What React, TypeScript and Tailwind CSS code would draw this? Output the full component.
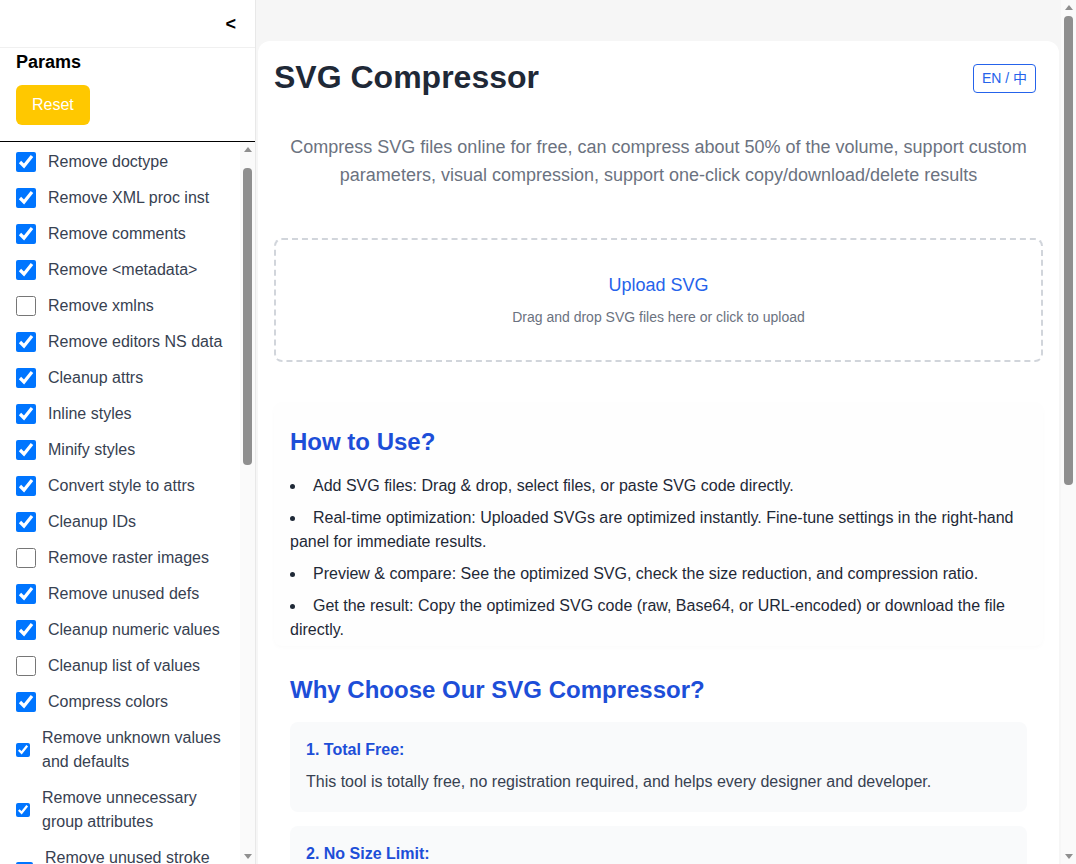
import React from 'react';

type Param = { label: string; checked: boolean; box?: string };

// the long labels wrap, and their checkbox is squeezed like in the original
const params: Param[] = [
  { label: 'Remove doctype', checked: true },
  { label: 'Remove XML proc inst', checked: true },
  { label: 'Remove comments', checked: true },
  { label: 'Remove <metadata>', checked: true },
  { label: 'Remove xmlns', checked: false },
  { label: 'Remove editors NS data', checked: true },
  { label: 'Cleanup attrs', checked: true },
  { label: 'Inline styles', checked: true },
  { label: 'Minify styles', checked: true },
  { label: 'Convert style to attrs', checked: true },
  { label: 'Cleanup IDs', checked: true },
  { label: 'Remove raster images', checked: false },
  { label: 'Remove unused defs', checked: true },
  { label: 'Cleanup numeric values', checked: true },
  { label: 'Cleanup list of values', checked: false },
  { label: 'Compress colors', checked: true },
  { label: 'Remove unknown values and defaults', checked: true, box: 'w-[14px] h-[14px]' },
  { label: 'Remove unnecessary group attributes', checked: true, box: 'w-[14px] h-[14px]' },
  { label: 'Remove unused stroke and fill', checked: true, box: 'w-[17px] h-[17px]' },
  { label: 'Remove viewBox', checked: false },
  { label: 'Cleanup enable background', checked: true },
  { label: 'Remove hidden elems', checked: true },
  { label: 'Remove empty text', checked: true },
  { label: 'Convert shape to path', checked: true },
  { label: 'Convert ellipse to circle', checked: true },
  { label: 'Move elems attrs to group', checked: true },
  { label: 'Move group attrs to elems', checked: true },
  { label: 'Collapse groups', checked: true },
  { label: 'Convert path data', checked: true },
  { label: 'Convert transform', checked: true },
  { label: 'Remove empty attrs', checked: true },
  { label: 'Remove empty containers', checked: true },
  { label: 'Merge paths', checked: true },
  { label: 'Remove unused NS', checked: true },
  { label: 'Sort attrs', checked: false },
  { label: 'Sort defs children', checked: true },
  { label: 'Remove title', checked: true },
  { label: 'Remove desc', checked: true },
];

const steps = [
  'Add SVG files: Drag & drop, select files, or paste SVG code directly.',
  'Real-time optimization: Uploaded SVGs are optimized instantly. Fine-tune settings in the right-hand panel for immediate results.',
  'Preview & compare: See the optimized SVG, check the size reduction, and compression ratio.',
  'Get the result: Copy the optimized SVG code (raw, Base64, or URL-encoded) or download the file directly.',
];

const reasons = [
  {
    title: '1. Total Free:',
    text: 'This tool is totally free, no registration required, and helps every designer and developer.',
  },
  {
    title: '2. No Size Limit:',
    text: 'Compress as many SVG files as you want, there is no limit on the file size or the number of files.',
  },
  {
    title: '3. Privacy First:',
    text: 'All files are processed locally in your browser and never uploaded to any server.',
  },
  {
    title: '4. Custom Parameters:',
    text: 'Every optimization option can be switched on or off, and the result updates in real time.',
  },
  {
    title: '5. Batch Processing:',
    text: 'Upload several files at once and copy or download all the results with one click.',
  },
];

const Arrow: React.FC<{ down?: boolean }> = ({ down }) => (
  <div className="h-[15px] shrink-0 flex items-center justify-center">
    <svg width="8" height="5" viewBox="0 0 8 5">
      <polygon points={down ? '0,0 8,0 4,5' : '0,5 8,5 4,0'} fill="#8f8f8f" />
    </svg>
  </div>
);

// looks of the classic scrollbar from the screenshot
const ScrollBar: React.FC<{ thumb: string }> = ({ thumb }) => (
  <div className="w-[15px] shrink-0 bg-[#fafafa] flex flex-col">
    <Arrow />
    <div className="flex-1 px-[3px]">
      <div className={`${thumb} rounded-[4px] bg-[#8f8f8f]`} />
    </div>
    <Arrow down />
  </div>
);

const App: React.FC = () => {
  return (
    <div className="flex h-screen overflow-hidden font-['Liberation_Sans','Noto_Sans_CJK_SC',Arial,sans-serif]">
      {/* Sidebar */}
      <aside className="w-64 shrink-0 bg-white border-r border-[#e8e8e8] flex flex-col">
        <div className="h-12 shrink-0 border-b border-[#f0f0f0] flex items-center justify-end pr-[19px]">
          <button className="text-lg font-bold text-black leading-none">&lt;</button>
        </div>

        <div className="px-4 pb-4 border-b border-black shrink-0">
          <h3 className="text-lg font-bold text-black leading-7">Params</h3>
          <button className="mt-[9px] h-10 px-4 bg-[#ffc800] text-white rounded-md text-base">Reset</button>
        </div>

        <div className="flex-1 min-h-0 flex">
          <div className="flex-1 overflow-hidden pl-4 pr-3 pt-[2px]">
            {params.map((p) => (
              <label key={p.label} className="flex items-center gap-3 py-1.5 text-base leading-6 text-[#374151]">
                <input
                  type="checkbox"
                  defaultChecked={p.checked}
                  className={`${p.box ?? 'w-5 h-5'} m-0 shrink-0`}
                />
                <span>{p.label}</span>
              </label>
            ))}
          </div>
          <ScrollBar thumb="mt-[11px] h-[297px]" />
        </div>
      </aside>

      {/* Main */}
      <main className="flex-1 flex min-w-0 bg-[#f6f6f6]">
        <div className="flex-1 min-w-0 overflow-hidden px-0.5 pt-[41px]">
          <div className="bg-white rounded-xl px-4 pt-[18px] pb-10">
            <div className="flex items-center justify-between">
              <h1 className="text-[32px] font-bold text-[#1f2937] leading-9">SVG Compressor</h1>
              <button className="mr-[7px] mt-[2px] h-[29px] px-2 border border-[#2563eb] rounded text-sm text-[#2563eb]">
                EN / 中
              </button>
            </div>

            <p className="mt-[38px] text-center text-lg leading-7 text-[#6b7280]">
              Compress SVG files online for free, can compress about 50% of the volume, support custom parameters,
              visual compression, support one-click copy/download/delete results
            </p>

            <div className="mt-[49px] border-2 border-dashed border-[#d1d5db] rounded-lg pt-[31px] pb-[33px] text-center">
              <p className="text-lg leading-7 text-[#2563eb]">Upload SVG</p>
              <p className="mt-2 text-sm leading-5 text-[#6b7280]">Drag and drop SVG files here or click to upload</p>
            </div>

            <section className="mt-10 pt-6 pb-1 px-4 bg-[#fefefe] rounded-lg shadow-[0_2px_4px_rgba(0,0,0,0.02)]">
              <h2 className="text-2xl font-bold text-[#1d4ed8] leading-8">How to Use?</h2>
              <ul className="mt-4 list-disc list-inside text-base leading-6 text-[#1f2937]">
                {steps.map((s) => (
                  <li key={s} className="mb-2 last:mb-0">
                    <span className="ml-[1px]">{s}</span>
                  </li>
                ))}
              </ul>
            </section>

            <section className="pt-7 px-4">
              <h2 className="text-2xl font-bold text-[#1d4ed8] leading-8">Why Choose Our SVG Compressor?</h2>
              <div className="mt-4 flex flex-col gap-3.5">
                {reasons.map((r) => (
                  <div key={r.title} className="bg-[#f9fafb] rounded-lg px-4 pt-4 pb-[18px]">
                    <h3 className="text-base font-bold text-[#1d4ed8] leading-6">{r.title}</h3>
                    <p className="mt-2 text-base leading-6 text-[#374151]">{r.text}</p>
                  </div>
                ))}
              </div>
            </section>
          </div>
        </div>
        <ScrollBar thumb="mt-[1px] h-[469px]" />
      </main>
    </div>
  );
};

export default App;
